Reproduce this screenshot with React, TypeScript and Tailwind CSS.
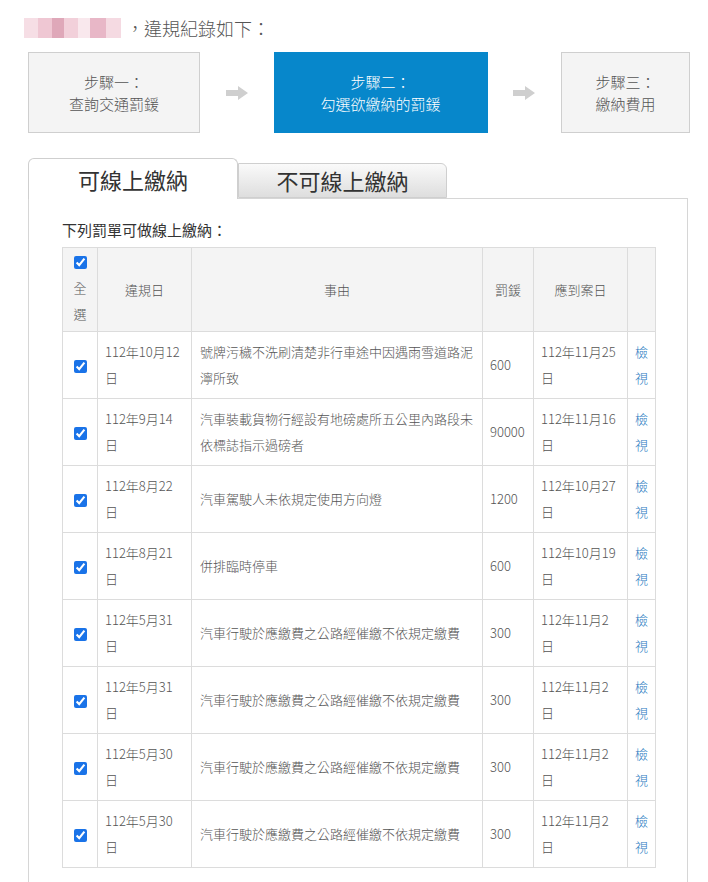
import React from 'react';

type Fine = {
  date: string;
  reason: string[];
  amount: string;
  due: string;
};

const fines: Fine[] = [
  { date: '112年10月12', reason: ['號牌污穢不洗刷清楚非行車途中因遇雨雪道路泥', '濘所致'], amount: '600', due: '112年11月25' },
  { date: '112年9月14', reason: ['汽車裝載貨物行經設有地磅處所五公里內路段未', '依標誌指示過磅者'], amount: '90000', due: '112年11月16' },
  { date: '112年8月22', reason: ['汽車駕駛人未依規定使用方向燈'], amount: '1200', due: '112年10月27' },
  { date: '112年8月21', reason: ['併排臨時停車'], amount: '600', due: '112年10月19' },
  { date: '112年5月31', reason: ['汽車行駛於應繳費之公路經催繳不依規定繳費'], amount: '300', due: '112年11月2' },
  { date: '112年5月31', reason: ['汽車行駛於應繳費之公路經催繳不依規定繳費'], amount: '300', due: '112年11月2' },
  { date: '112年5月30', reason: ['汽車行駛於應繳費之公路經催繳不依規定繳費'], amount: '300', due: '112年11月2' },
  { date: '112年5月30', reason: ['汽車行駛於應繳費之公路經催繳不依規定繳費'], amount: '300', due: '112年11月2' },
];

const StepArrow = () => (
  <div className="flex-1 flex items-center justify-center">
    <svg width="22" height="14" viewBox="0 0 22 14">
      <path d="M0 4h12V0l10 7-10 7v-4H0z" fill="#cfcfcf" />
    </svg>
  </div>
);

const cell = 'border border-[#dcdcdc] align-middle';

export default function App() {
  return (
    <div
      className="w-[708px] min-h-[882px] bg-white text-[#555] font-light overflow-hidden"
      style={{ fontFamily: '"Noto Sans CJK TC", "Noto Sans", sans-serif' }}
    >
      {/* 標題 */}
      <div className="flex items-center pl-[24px] pt-[14px] h-[42px]">
        <div className="flex h-[20px] w-[97px] opacity-90">
          <div className="w-[14px] bg-[#f6dbe3]" />
          <div className="w-[14px] bg-[#eec2cf]" />
          <div className="w-[12px] bg-[#dc9fb2]" />
          <div className="w-[14px] bg-[#f1ccd7]" />
          <div className="w-[12px] bg-[#f9e6ec]" />
          <div className="w-[16px] bg-[#e6b0c1]" />
          <div className="w-[15px] bg-[#f4d6df]" />
        </div>
        <span className="ml-[5px] text-[18px] leading-[24px] text-[#555]">，違規紀錄如下：</span>
      </div>

      {/* 步驟 */}
      <div className="flex mt-[10px] ml-[28px] w-[662px] h-[81px]">
        <div className="w-[172px] border border-[#cfcfcf] bg-[#f4f4f4] flex flex-col items-center justify-center text-[15px] leading-[22px] text-[#555]">
          <div>步驟一：</div>
          <div>查詢交通罰鍰</div>
        </div>
        <StepArrow />
        <div className="w-[214px] bg-[#0787cb] flex flex-col items-center justify-center text-[15px] leading-[22px] text-white">
          <div>步驟二：</div>
          <div>勾選欲繳納的罰鍰</div>
        </div>
        <StepArrow />
        <div className="w-[129px] border border-[#cfcfcf] bg-[#f4f4f4] flex flex-col items-center justify-center text-[15px] leading-[22px] text-[#555]">
          <div>步驟三：</div>
          <div>繳納費用</div>
        </div>
      </div>

      {/* 分頁 */}
      <div className="ml-[28px] mt-[25px] w-[660px]">
        <div className="flex items-end">
          <div className="relative z-10 -mb-px w-[210px] h-[41px] border border-b-0 border-[#cfcfcf] rounded-t-[6px] bg-white flex items-center justify-center text-[22px] font-normal text-[#333]">
            可線上繳納
          </div>
          <div className="w-[209px] h-[35px] border border-[#cfcfcf] rounded-tr-[6px] bg-gradient-to-b from-[#fafafa] to-[#dedede] flex items-center justify-center text-[22px] font-normal text-[#333]">
            不可線上繳納
          </div>
        </div>

        <div className="border border-b-0 border-[#d6d6d6] pl-[33px] pt-[21px] pb-[20px] min-h-[700px]">
          <div className="text-[15px] leading-[20px] font-normal text-[#333] mb-[7px]">下列罰單可做線上繳納：</div>

          <table className="border-collapse table-fixed w-[593px] text-[13px] leading-[26px] text-[#555]">
            <colgroup>
              <col className="w-[35px]" />
              <col className="w-[94px]" />
              <col className="w-[291px]" />
              <col className="w-[51px]" />
              <col className="w-[94px]" />
              <col className="w-[28px]" />
            </colgroup>
            <thead>
              <tr className="bg-[#f4f4f4]">
                <th className={`${cell} font-light pt-[1px] pb-[4px]`}>
                  <div className="flex flex-col items-center">
                    <div className="h-[26px] flex items-center">
                      <input type="checkbox" defaultChecked className="w-[13px] h-[13px] m-0 accent-[#1a73e8]" />
                    </div>
                    <div>全</div>
                    <div>選</div>
                  </div>
                </th>
                <th className={`${cell} font-light`}>違規日</th>
                <th className={`${cell} font-light`}>事由</th>
                <th className={`${cell} font-light`}>罰鍰</th>
                <th className={`${cell} font-light`}>應到案日</th>
                <th className={cell}></th>
              </tr>
            </thead>
            <tbody>
              {fines.map((f, i) => (
                <tr key={i} className="h-[67px]">
                  <td className={`${cell} text-center`}>
                    <input type="checkbox" defaultChecked className="w-[13px] h-[13px] m-0 align-middle accent-[#1a73e8]" />
                  </td>
                  <td className={`${cell} px-[7px] py-[7px]`}>
                    <div>{f.date}</div>
                    <div>日</div>
                  </td>
                  <td className={`${cell} px-[8px] py-[7px]`}>
                    {f.reason.map((r, j) => (
                      <div key={j} className="whitespace-nowrap">{r}</div>
                    ))}
                  </td>
                  <td className={`${cell} px-[7px]`}>{f.amount}</td>
                  <td className={`${cell} px-[7px] py-[7px]`}>
                    <div>{f.due}</div>
                    <div>日</div>
                  </td>
                  <td className={`${cell} px-[7px] text-[#2a7bbf]`}>
                    <div>檢</div>
                    <div>視</div>
                  </td>
                </tr>
              ))}
            </tbody>
          </table>
        </div>
      </div>
    </div>
  );
}
